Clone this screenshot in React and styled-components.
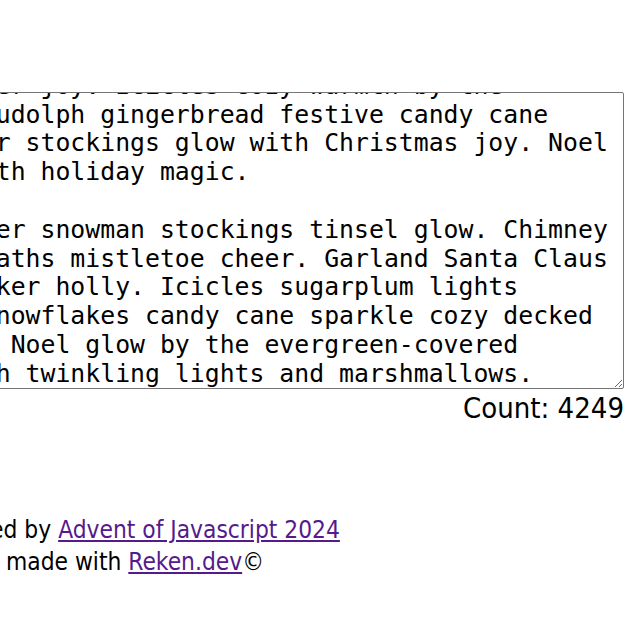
import React, { useEffect, useRef } from 'react'
import styled, { createGlobalStyle } from 'styled-components'

const GlobalStyle = createGlobalStyle`
  html, body {
    margin: 0;
    padding: 0;
    background: #ffffff;
    overflow: hidden;
  }
`

const Page = styled.main`
  width: 694px;
  margin-left: -70px;
  padding-top: 92px;
  font-family: 'DejaVu Sans Condensed', 'DejaVu Sans', sans-serif;
  font-stretch: condensed;
  color: #000000;
`

const Editor = styled.textarea`
  display: block;
  box-sizing: border-box;
  width: 100%;
  height: 297px;
  margin: 0;
  padding: 2px 2px 2px 5px;
  border: 1px solid #767676;
  border-radius: 2px;
  font-family: 'DejaVu Sans Mono', monospace;
  font-size: 24.8px;
  line-height: 28.8px;
  color: #000000;
  background: #ffffff;
  overflow: hidden;
  white-space: pre-wrap;
`

const Count = styled.div`
  margin-top: 2px;
  text-align: right;
  font-size: 29px;
  line-height: normal;
`

const Footer = styled.footer`
  margin-top: 89px;
  font-size: 24.3px;
  line-height: 32px;
`

const Link = styled.a`
  color: #551a8b;
  text-decoration: underline;
`

const lines = [
  'Merry twinkling garland sleigh bells ring in',
  'the frosty night. Candy cane cocoa mittens',
  'glisten while carolers sing. Reindeer prance',
  'over snowy rooftops and stockings hang by',
  'the chimney. Gingerbread wreaths and merry',
  'laughter fill the cozy cabin. Winter cheer,',
  'Winter joy. Icicles cozy warmth by the',
  'Ho Rudolph gingerbread festive candy cane',
  'Amber stockings glow with Christmas joy. Noel',
  's with holiday magic.',
  '',
  'Silver snowman stockings tinsel glow. Chimney',
  ' Wreaths mistletoe cheer. Garland Santa Claus',
  'Cracker holly. Icicles sugarplum lights',
  'Oh Snowflakes candy cane sparkle cozy decked',
  'with Noel glow by the evergreen-covered',
  'porch twinkling lights and marshmallows.',
]

const App = () => {
  const editorRef = useRef(null)

  useEffect(() => {
    // the reference is scrolled a few pixels short of the very bottom
    const el = editorRef.current
    if (el) el.scrollTop = el.scrollHeight - el.clientHeight - 3
  }, [])

  return (
    <>
      <GlobalStyle />
      <Page>
        <Editor ref={editorRef} defaultValue={lines.join('\n')} spellCheck={false} />
        <Count>Count: 4249</Count>
        <Footer>
          <div>
            Inspired by <Link href='#'>Advent of Javascript 2024</Link>
          </div>
          <div>
            This is made with <Link href='#'>Reken.dev</Link>©
          </div>
        </Footer>
      </Page>
    </>
  )
}

export default App
